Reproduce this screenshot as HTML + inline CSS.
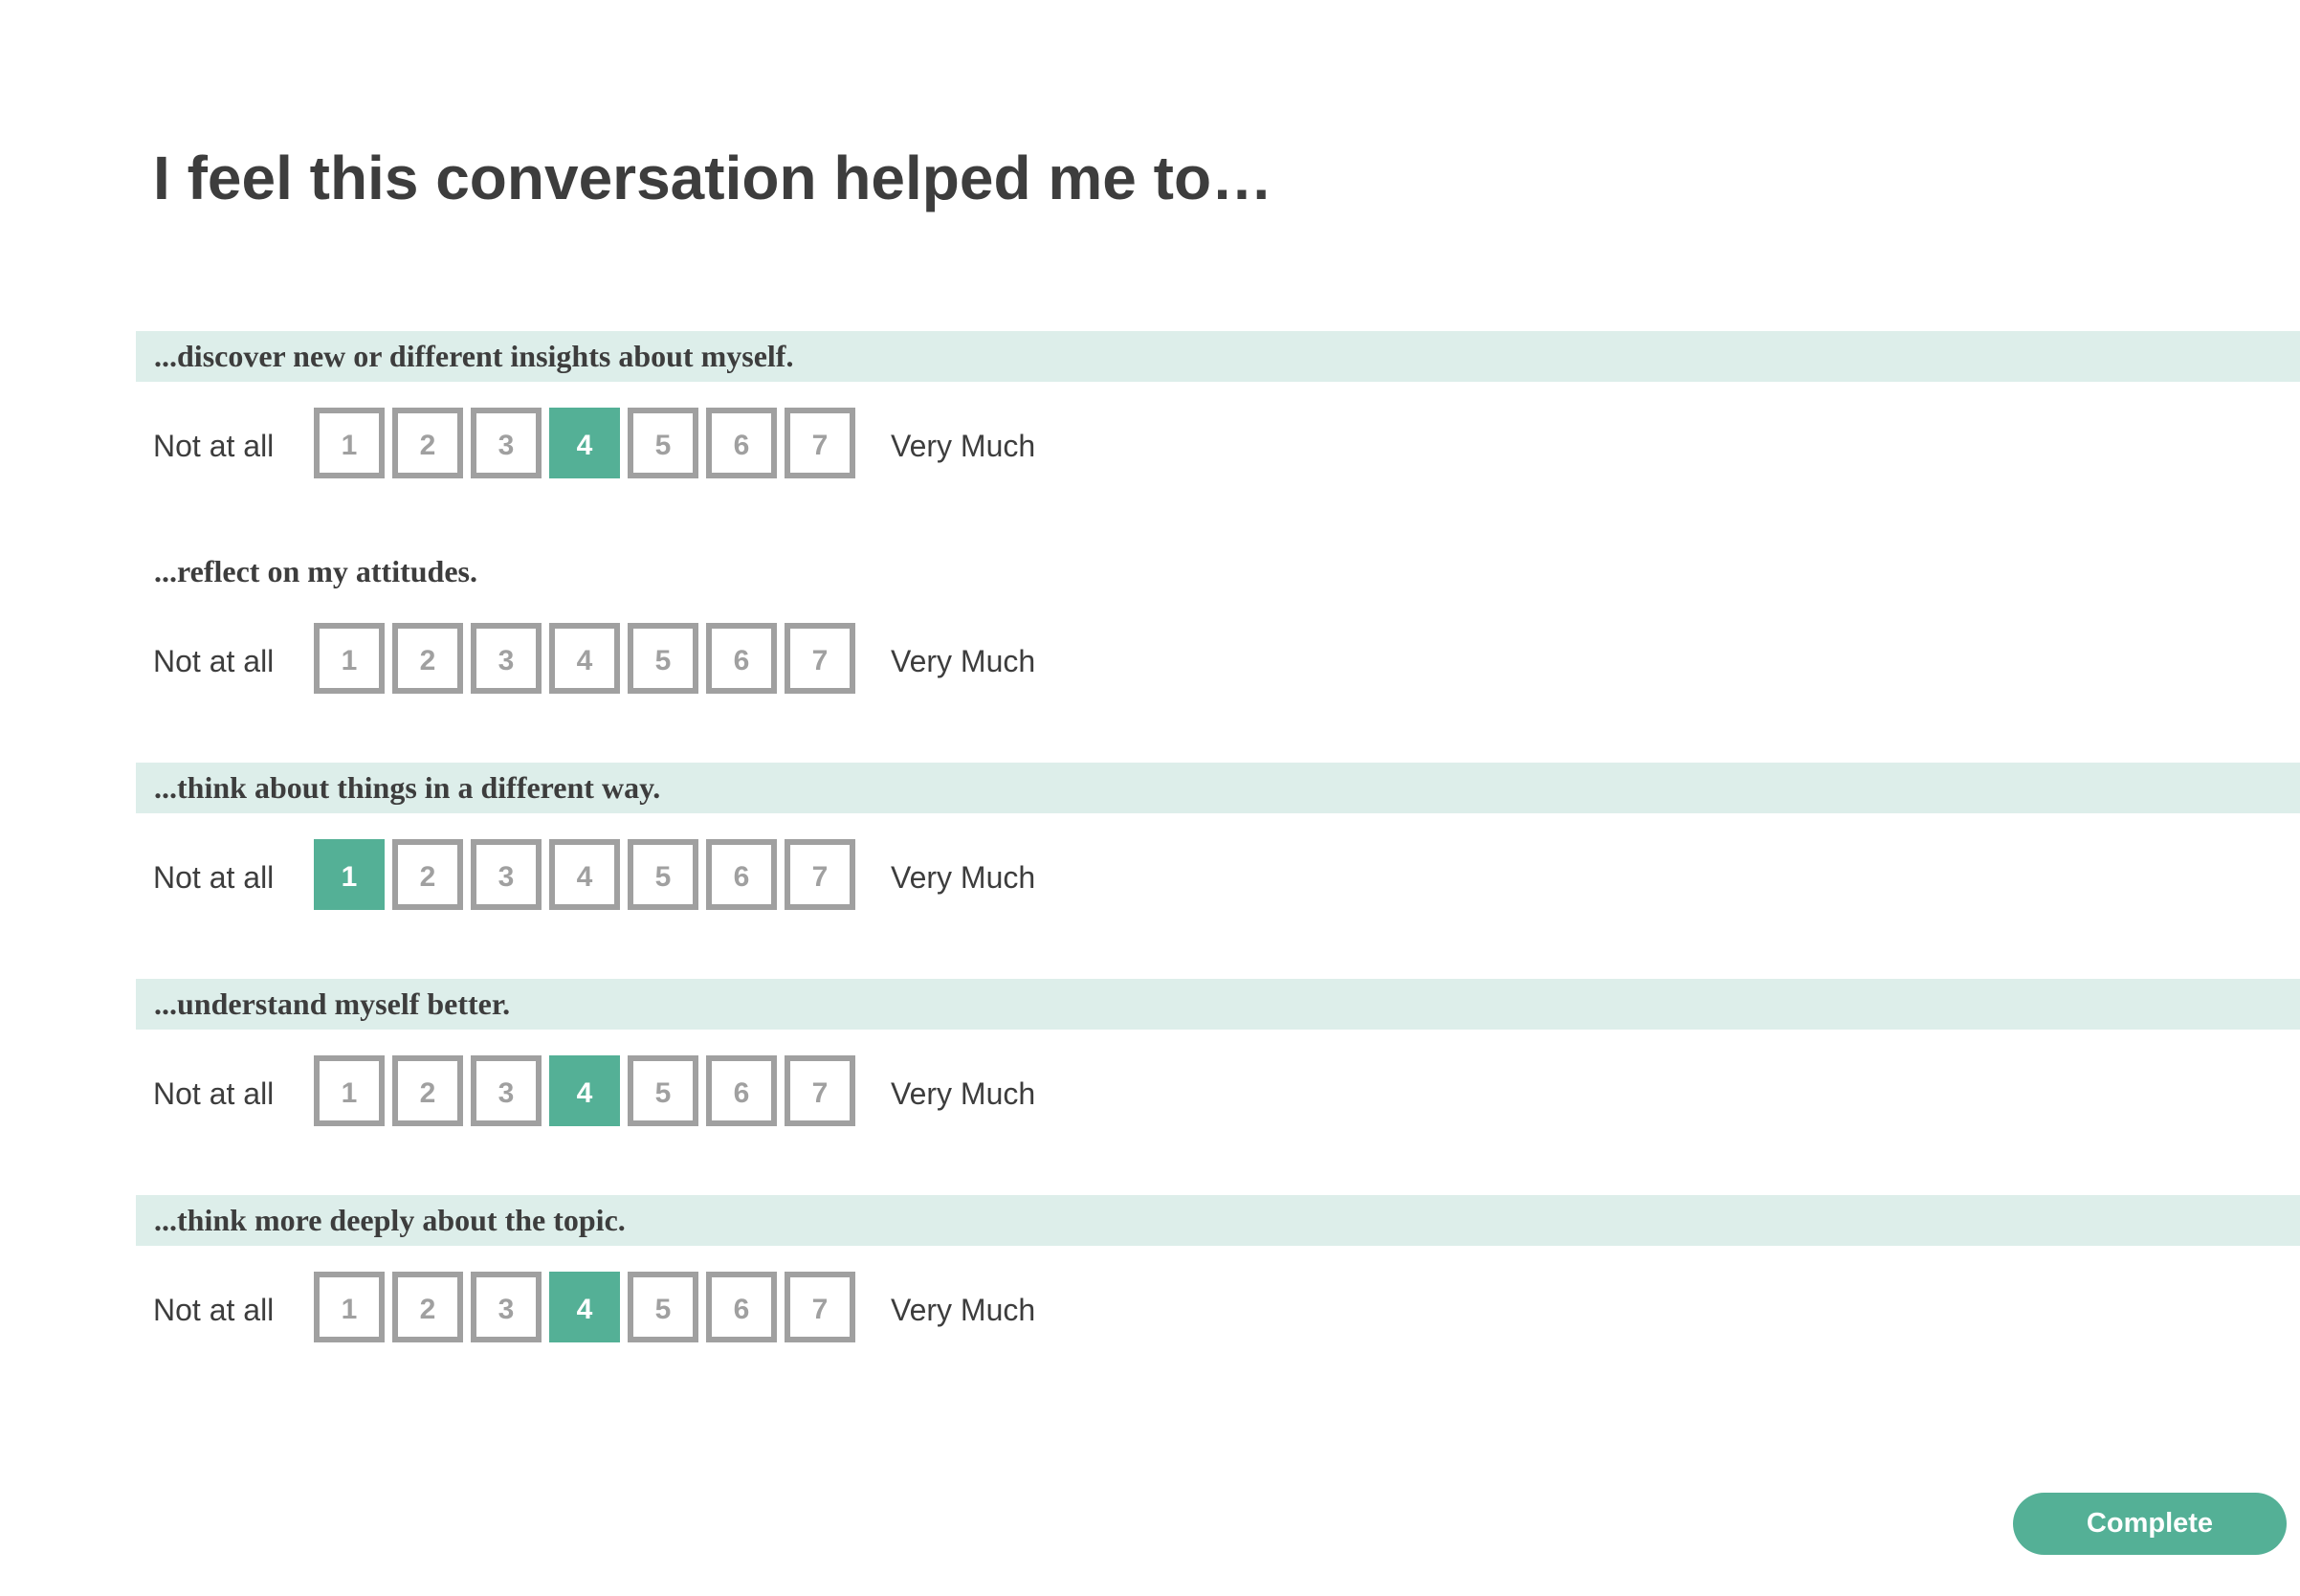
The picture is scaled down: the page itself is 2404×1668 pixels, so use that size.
<!DOCTYPE html>
<html><head><meta charset="utf-8"><style>
*{margin:0;padding:0;box-sizing:border-box}
body{width:2404px;height:1668px;background:#fff;position:relative;overflow:hidden;font-family:"Liberation Sans",Arial,sans-serif;color:#3d3d3d}
h1{position:absolute;left:160px;top:146px;font-size:64px;font-weight:bold;line-height:80px;color:#3d3d3d;white-space:nowrap}
.band{position:absolute;left:142px;right:0;height:53px;}
.band.bg{background:#ddeeea}
.band span{position:absolute;left:19px;top:0;line-height:53px;font-family:"Liberation Serif","Times New Roman",serif;font-weight:bold;font-size:32px;color:#3d3d3d;white-space:nowrap}
.row{position:absolute;left:0;height:74px;width:1200px}
.lbl{position:absolute;top:3px;line-height:74px;font-size:32px;color:#3d3d3d;white-space:nowrap}
.box{position:absolute;top:0;width:74px;height:74px;border:6px solid #a0a0a0;background:#fff;color:#a0a0a0;font-weight:bold;font-size:30px;text-align:center;line-height:68px}
.box.sel{background:#54b096;border-color:#54b096;color:#fff}
.btn{position:absolute;left:2104px;top:1560px;width:286px;height:65px;border-radius:33px;background:#54b096;color:#fff;font-weight:bold;font-size:29px;text-align:center;line-height:65px}
</style></head><body>
<h1>I feel this conversation helped me to…</h1>

<div class="band bg" style="top:346px"><span>...discover new or different insights about myself.</span></div>
<div class="row" style="top:426px"><div class="lbl" style="left:160px">Not at all</div>
<div class="box" style="left:328px">1</div><div class="box" style="left:410px">2</div><div class="box" style="left:492px">3</div><div class="box sel" style="left:574px">4</div><div class="box" style="left:656px">5</div><div class="box" style="left:738px">6</div><div class="box" style="left:820px">7</div>
<div class="lbl" style="left:931px">Very Much</div></div>

<div class="band" style="top:571px"><span>...reflect on my attitudes.</span></div>
<div class="row" style="top:651px"><div class="lbl" style="left:160px">Not at all</div>
<div class="box" style="left:328px">1</div><div class="box" style="left:410px">2</div><div class="box" style="left:492px">3</div><div class="box" style="left:574px">4</div><div class="box" style="left:656px">5</div><div class="box" style="left:738px">6</div><div class="box" style="left:820px">7</div>
<div class="lbl" style="left:931px">Very Much</div></div>

<div class="band bg" style="top:797px"><span>...think about things in a different way.</span></div>
<div class="row" style="top:877px"><div class="lbl" style="left:160px">Not at all</div>
<div class="box sel" style="left:328px">1</div><div class="box" style="left:410px">2</div><div class="box" style="left:492px">3</div><div class="box" style="left:574px">4</div><div class="box" style="left:656px">5</div><div class="box" style="left:738px">6</div><div class="box" style="left:820px">7</div>
<div class="lbl" style="left:931px">Very Much</div></div>

<div class="band bg" style="top:1023px"><span>...understand myself better.</span></div>
<div class="row" style="top:1103px"><div class="lbl" style="left:160px">Not at all</div>
<div class="box" style="left:328px">1</div><div class="box" style="left:410px">2</div><div class="box" style="left:492px">3</div><div class="box sel" style="left:574px">4</div><div class="box" style="left:656px">5</div><div class="box" style="left:738px">6</div><div class="box" style="left:820px">7</div>
<div class="lbl" style="left:931px">Very Much</div></div>

<div class="band bg" style="top:1249px"><span>...think more deeply about the topic.</span></div>
<div class="row" style="top:1329px"><div class="lbl" style="left:160px">Not at all</div>
<div class="box" style="left:328px">1</div><div class="box" style="left:410px">2</div><div class="box" style="left:492px">3</div><div class="box sel" style="left:574px">4</div><div class="box" style="left:656px">5</div><div class="box" style="left:738px">6</div><div class="box" style="left:820px">7</div>
<div class="lbl" style="left:931px">Very Much</div></div>

<div class="btn">Complete</div>
</body></html>
